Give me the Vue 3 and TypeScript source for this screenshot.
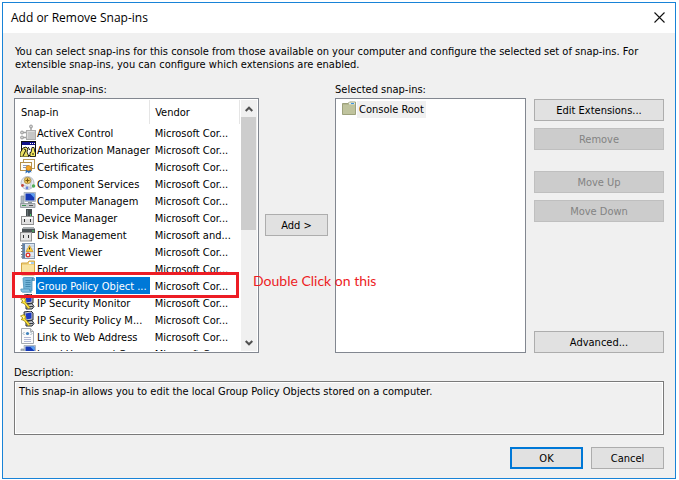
<script setup lang="ts">
import { ref } from 'vue'

interface SnapIn {
  name: string
  vendor: string
  icon: string
}

const corp = 'Microsoft Cor...'

const snapIns: SnapIn[] = [
  { name: 'ActiveX Control', vendor: corp, icon: 'activex' },
  { name: 'Authorization Manager', vendor: corp, icon: 'authorization' },
  { name: 'Certificates', vendor: corp, icon: 'certificate' },
  { name: 'Component Services', vendor: corp, icon: 'component' },
  { name: 'Computer Managem', vendor: corp, icon: 'computer' },
  { name: 'Device Manager', vendor: corp, icon: 'device' },
  { name: 'Disk Management', vendor: 'Microsoft and...', icon: 'disk' },
  { name: 'Event Viewer', vendor: corp, icon: 'event' },
  { name: 'Folder', vendor: corp, icon: 'folder' },
  { name: 'Group Policy Object ...', vendor: corp, icon: 'policy' },
  { name: 'IP Security Monitor', vendor: corp, icon: 'security' },
  { name: 'IP Security Policy M...', vendor: corp, icon: 'security' },
  { name: 'Link to Web Address', vendor: corp, icon: 'link' },
  { name: 'Local Users and Gro...', vendor: corp, icon: 'computer' },
]

const selected = ref(9)
const description = ref(
  'This snap-in allows you to edit the local Group Policy Objects stored on a computer.',
)
</script>

<template>
  <svg class="sprite" aria-hidden="true">
    <symbol id="activex" viewBox="0 0 16 16">
      <path d="M11 3v4M3 8.5h4M3 13.5h4" stroke="#a0a0a0" stroke-width="1.4" />
      <rect x="6.5" y="6.5" width="9" height="9" fill="#c6c6c6" stroke="#adadad" />
      <path d="M7.5 14.500V7.500h7" fill="none" stroke="#dcdcdc" />
      <g fill="#cfcfcf" stroke="#8f8f8f" stroke-width=".8">
        <circle cx="11" cy="2.500" r="1.500" />
        <circle cx="2" cy="8.500" r="1.500" />
        <circle cx="2" cy="13.500" r="1.500" />
      </g>
    </symbol>
    <symbol id="authorization" viewBox="0 0 16 16">
      <rect x="1.500" y=".5" width="14" height="14" fill="#fff" stroke="#111" />
      <path d="M2 1h13v3H2z" fill="#10108a" />
      <path d="M10 2.500h1M12 2.500h1M14 2.500h1" stroke="#fff" />
      <path d="M0 16v-4l3-5 3-1 2 2-1 3 2 5z" fill="#e9de62" stroke="#111" stroke-width=".9" />
      <path d="M4 8l2 1-3 6" fill="none" stroke="#111" />
      <path d="M10 15.500v-4h1l1-5h2l1 5h.5v4z" fill="#f4e95a" stroke="#111" stroke-width=".9" />
      <path d="M8 6l2 3M12 13h2" stroke="#111" />
    </symbol>
    <symbol id="certificate" viewBox="0 0 16 16">
      <rect x="3.500" y="1.500" width="11" height="9" fill="#fff" stroke="#b99a58" />
      <rect x=".5" y="4.500" width="11" height="8" fill="#fffdf5" stroke="#b5904a" />
      <path d="M3 7.500h6M3 9.500h3" stroke="#8797b9" />
      <path d="M6 10.500l-.5 5 2-1.500 1.500 1.500 1-1.500 1.500.5-1.500-4z" fill="#2f6fb8" />
      <circle cx="8.500" cy="10" r="2.500" fill="#f5a623" stroke="#c97b12" stroke-width=".7" />
    </symbol>
    <symbol id="component" viewBox="0 0 16 16">
      <circle cx="7.500" cy="8" r="6.500" fill="#e8eaee" stroke="#b9bec8" />
      <path d="M3 10l9 3M12 3l-2 10" stroke="#c3c9d2" />
      <circle cx="7.500" cy="5.500" r="3.300" fill="#e9c35a" stroke="#a08541" stroke-width=".7" />
      <path d="M7.500 3.500v4M5.500 5.500h4" stroke="#745509" />
      <circle cx="2.500" cy="10.500" r="1.400" fill="#c7453d" />
      <circle cx="13.500" cy="11" r="1.800" fill="#52ae58" />
      <circle cx="7" cy="13" r="1.400" fill="#6b83d8" />
    </symbol>
    <symbol id="computer" viewBox="0 0 16 16">
      <path d="M1 4h3v8H1z" fill="#aeb7bf" stroke="#8a949d" stroke-width=".7" />
      <path d="M4 .5h11.500v9H5z" fill="#d8dfe5" stroke="#a0aab3" stroke-width=".8" />
      <path d="M5.500 1.500h9v7h-9z" fill="#1639b6" />
      <path d="M10 1.500h4.500V6z" fill="#5ba0f2" />
      <path d="M8 10h4v2H8z" fill="#8b969e" />
      <path d="M.5 11.500h14.500v4H.5z" fill="#c5c9cc" stroke="#8a9197" stroke-width=".8" />
      <path d="M2 13.500h4" stroke="#3a9151" />
      <path d="M9 13.500h4" stroke="#555" />
    </symbol>
    <symbol id="device" viewBox="0 0 16 16">
      <path d="M6 0h6v8H6z" fill="#454d50" />
      <path d="M7 1h1v6H7z" fill="#697477" />
      <path d="M10 5h1v2h-1z" fill="#41d063" />
      <rect x="1.500" y="7.500" width="12" height="8" fill="#e1e1e1" stroke="#929292" />
      <path d="M2 8h11v2H2z" fill="#fafafa" />
      <path d="M4 10h1v3H4zM10 10h1v3h-1z" fill="#333" />
    </symbol>
    <symbol id="disk" viewBox="0 0 16 16">
      <path d="M2 3l2-2h9l2 2v4H2z" fill="#4d5457" />
      <path d="M2 3l2-2h9l2 2z" fill="#a7adaf" />
      <path d="M12 5h2" stroke="#47d96b" />
      <rect x=".5" y="6.500" width="11" height="8.500" fill="#e5e5e5" stroke="#949494" />
      <path d="M3 9h1v3H3zM8 9h1v3H8z" fill="#333" />
    </symbol>
    <symbol id="event" viewBox="0 0 16 16">
      <rect x="2.500" y=".5" width="12" height="15" fill="#dfe8f1" stroke="#8497ae" />
      <path d="M3 1h2v14H3z" fill="#5b80ae" />
      <path d="M1 2.500h3M1 5.500h3M1 8.500h3M1 11.500h3M1 14h3" stroke="#777f88" />
      <path d="M7 3h7M7 13.500h7M6 6h8M6 9h8" stroke="#b5c5d5" stroke-width=".8" />
      <path d="M9.500 2.500l3.500 6H6z" fill="#ffd13d" stroke="#bf8516" stroke-width=".6" />
      <path d="M9.500 4.500v2" stroke="#3d3000" />
      <circle cx="8" cy="12" r="2.500" fill="#dc3931" />
      <path d="M7 11l2 2M9 11l-2 2" stroke="#fff" stroke-width=".9" />
    </symbol>
    <symbol id="folder" viewBox="0 0 16 16">
      <path d="M1.500 3h6l1.500-2h5.500v14h-13z" fill="#eed17d" stroke="#d2a642" />
      <path d="M9 2h5v2H9z" fill="#fff" />
      <path d="M11 3h3" stroke="#4f9cdd" />
      <path d="M2 5h12v9H2z" fill="#f8e4a2" />
    </symbol>
    <symbol id="policy" viewBox="0 0 16 16">
      <path d="M3 1.500Q3 .5 4.500.5h8.500q1.500 0 1.500 2v1H12V14H4z" fill="#73b4d8" stroke="#4a92bb" stroke-width=".8" />
      <path d="M.8 12h8.700q0 3 2 3.200h-9Q.8 15 .8 12z" fill="#8cc4e2" stroke="#4a92bb" stroke-width=".8" />
      <path d="M5.500 3.500h5M5.500 5.500h5M5.500 7.500h5M5.500 9.500h5" stroke="#3f84ab" stroke-width=".9" />
      <path d="M12 3.500q0-2 1-2.500" fill="none" stroke="#2c6f99" stroke-width=".8" />
    </symbol>
    <symbol id="security" viewBox="0 0 16 16">
      <path d="M4 1l7-1 2 2v7l-8 1z" fill="#c7cad0" stroke="#252a35" />
      <path d="M5.500 2.500l6-1v6l-5 1z" fill="#1c39c4" />
      <path d="M6 10.500l6-1 2 3-2 2.500H6z" fill="#c2c5ca" stroke="#252a35" />
      <path d="M9 12.500h4" stroke="#353a45" />
      <path d="M.5 5L4 3.500 6 6 5 7.500l5 6L8.500 15 4 9.500 1 8.500 3 7z" fill="#ffe33d" stroke="#8b7a0b" stroke-width=".7" />
      <path d="M2.500 5.500l1.500 1" stroke="#fff" />
    </symbol>
    <symbol id="link" viewBox="0 0 16 16">
      <path d="M1.500.5h9l3 3v12h-12z" fill="#fbfbfb" stroke="#a5aaaf" />
      <path d="M10.500.5v3h3" fill="#ddd" stroke="#a5aaaf" />
      <path d="M4.500 4l-1.500 1.500 1.500 1.500M10.500 4L12 5.500 10.500 7" fill="none" stroke="#8ba1b3" stroke-width=".9" />
      <circle cx="7.500" cy="5.500" r="1.600" fill="#3f83bd" />
      <path d="M4 9.500h7M4 11.500h7M4 13.500h7" stroke="#a9b1d0" stroke-width=".9" />
    </symbol>
    <symbol id="root" viewBox="0 0 16 16">
      <path d="M1.500 2.500h5.500l1.500-1.500h6v12.500h-13z" fill="#b2b68e" stroke="#9da17c" />
      <path d="M8 1.500h6v2H8z" fill="#e9eee6" />
      <path d="M10 2.500h3" stroke="#3c96e4" />
      <path d="M2 4h12v9H2z" fill="#bfc39d" />
    </symbol>
  </svg>

  <main class="dialog">
    <header class="titlebar">
      <h1>Add or Remove Snap-ins</h1>
      <button class="close" type="button" aria-label="Close">
        <svg viewBox="0 0 11 11"><path d="M.5.5l10 10M10.500.5l-10 10" stroke="#111" stroke-width="1.100" /></svg>
      </button>
    </header>

    <div class="body">
      <p class="intro">
        You can select snap-ins for this console from those available on your computer and configure the selected set of
        snap-ins. For extensible snap-ins, you can configure which extensions are enabled.
      </p>

      <div class="columns">
        <section class="field">
          <h2 id="available-label">Available snap-ins:</h2>
          <div class="panel available">
            <div class="viewport">
              <table aria-labelledby="available-label">
                <thead>
                  <tr>
                    <th class="name-head">Snap-in</th>
                    <th class="vendor-head">Vendor</th>
                  </tr>
                </thead>
                <tbody>
                  <tr
                    v-for="(item, index) in snapIns"
                    :key="item.name"
                    :class="{ selected: index === selected }"
                    @click="selected = index"
                  >
                    <td>
                      <div class="entry">
                        <svg class="icon"><use :href="'#' + item.icon" /></svg>
                        <span class="name">{{ item.name }}</span>
                      </div>
                    </td>
                    <td class="vendor">{{ item.vendor }}</td>
                  </tr>
                </tbody>
              </table>
            </div>
            <div class="scrollbar">
              <button type="button" aria-label="Scroll up">
                <svg viewBox="0 0 8 6"><path d="M.7 5L4 1.700 7.300 5" /></svg>
              </button>
              <div class="track"><div class="thumb"></div></div>
              <button type="button" aria-label="Scroll down">
                <svg viewBox="0 0 8 6"><path d="M.7 1L4 4.300 7.300 1" /></svg>
              </button>
            </div>
            <div class="callout">
              <div class="callout-box"></div>
              <span class="callout-text">Double Click on this</span>
            </div>
          </div>
        </section>

        <div class="add"><button class="btn" type="button">Add &gt;</button></div>

        <section class="field">
          <h2 id="selected-label">Selected snap-ins:</h2>
          <ul class="panel tree" aria-labelledby="selected-label">
            <li>
              <svg class="icon"><use href="#root" /></svg>
              <span class="node">Console Root</span>
            </li>
          </ul>
        </section>

        <div class="actions">
          <button class="btn" type="button">Edit Extensions...</button>
          <button class="btn" type="button" disabled>Remove</button>
          <button class="btn move" type="button" disabled>Move Up</button>
          <button class="btn" type="button" disabled>Move Down</button>
          <button class="btn advanced" type="button">Advanced...</button>
        </div>
      </div>

      <div class="description">
        <label for="description">Description:</label>
        <textarea id="description" v-model="description" readonly></textarea>
      </div>

      <footer class="footer">
        <button class="btn primary" type="button">OK</button>
        <button class="btn" type="button">Cancel</button>
      </footer>
    </div>
  </main>
</template>

<style>
body {
  background: #fff;
}
</style>

<style scoped>
.sprite {
  position: absolute;
  width: 0;
  height: 0;
}

.dialog {
  box-sizing: border-box;
  display: flex;
  flex-direction: column;
  min-height: calc(100vh - 3px);
  margin: 2px 3px 1px 2px;
  border: 1px solid #1883d7;
  background: #f0f0f0;
  color: #000;
  font: 11px/13px 'DejaVu Sans Condensed', 'DejaVu Sans', sans-serif;
}

.dialog button,
.dialog textarea {
  font: inherit;
  color: inherit;
}

.titlebar {
  display: flex;
  align-items: center;
  justify-content: space-between;
  height: 30px;
  padding: 0 10px 0 8px;
  background: #fff;
}

h1 {
  margin: 0;
  font: 12px/16px 'Open Sans', sans-serif;
}

.close {
  display: flex;
  padding: 0 0 2px;
  border: 0;
  background: none;
}

.close svg {
  width: 11px;
  height: 11px;
}

.body {
  padding: 12px 11px 9px;
}

.intro {
  margin: 0 0 12px 1px;
  padding-right: 24px;
}

.columns {
  display: grid;
  grid-template-columns: minmax(0, 245fr) 76px minmax(0, 191fr) 138px;
}

h2,
.description label {
  display: block;
  margin: 0 0 2px;
  font: inherit;
}

.panel {
  box-sizing: border-box;
  height: 255px;
  margin: 0;
  border: 1px solid #828790;
  background: #fff;
}

.available {
  position: relative;
  display: flex;
  padding: 1px 1px 1px 0;
}

.viewport {
  flex: 1;
  min-width: 0;
  overflow: hidden;
}

table {
  width: 100%;
  table-layout: fixed;
  border-collapse: collapse;
  white-space: nowrap;
}

th,
td {
  padding: 0;
  font-weight: normal;
  text-align: left;
}

th {
  box-sizing: border-box;
  height: 24px;
  border-right: 1px solid #e5e5e5;
}

.name-head {
  width: 60%;
  padding-left: 6px;
}

.vendor-head {
  padding-left: 5px;
}

.entry {
  display: flex;
  padding-left: 5px;
}

.icon {
  flex: none;
  width: 16px;
  height: 16px;
}

.name {
  flex: 1;
  padding: 2px 0 0 1px;
  line-height: 15px;
}

.vendor {
  padding: 2px 0 0 5px;
  line-height: 15px;
}

.selected .name {
  background: #0078d7;
  color: #fff;
}

.scrollbar {
  display: flex;
  flex-direction: column;
  width: 16px;
  margin-left: 1px;
  background: #f0f0f0;
}

.scrollbar button {
  display: flex;
  align-items: center;
  justify-content: center;
  height: 17px;
  padding: 0;
  border: 0;
  background: none;
}

.scrollbar svg {
  width: 8px;
  height: 6px;
  fill: none;
  stroke: #505050;
  stroke-width: 2;
}

.track {
  flex: 1;
}

.thumb {
  width: 15px;
  height: 52%;
  background: #cdcdcd;
}

.callout {
  position: absolute;
  top: 173px;
  left: -3px;
  display: flex;
  align-items: center;
  gap: 14px;
  width: calc(100% - 16px);
  pointer-events: none;
}

.callout-box {
  box-sizing: border-box;
  flex: none;
  width: 100%;
  height: 26px;
  border: 3px solid #ed1c24;
}

.callout-text {
  margin-top: -8px;
  color: #ed1c24;
  font: 14px/16px Lato, sans-serif;
  white-space: nowrap;
}

.btn {
  box-sizing: border-box;
  height: 22px;
  padding: 0;
  border: 1px solid #adadad;
  background: #e1e1e1;
  white-space: nowrap;
}

.dialog .btn:disabled {
  border-color: #bfbfbf;
  background: #ccc;
  color: #838383;
}

.add {
  display: flex;
  justify-content: center;
  align-items: center;
  padding: 14px 1px 0 0;
}

.add .btn {
  width: 63px;
}

.tree {
  padding: 2px 5px;
  list-style: none;
}

.tree li {
  display: flex;
}

.node {
  padding: 0 2px;
  background: #f0f0f0;
  line-height: 17px;
}

.actions {
  display: flex;
  flex-direction: column;
  gap: 7px;
  padding: 16px 0 0 8px;
}

.move {
  margin-top: 14px;
}

.advanced {
  margin-top: auto;
}

.description {
  margin-top: 13px;
}

textarea {
  box-sizing: border-box;
  display: block;
  width: 100%;
  height: 54px;
  padding: 3px 4px;
  border: 1px solid #7a7a7a;
  outline: 0;
  background: #f0f0f0;
  box-shadow: inset 0 0 0 1px #fff;
  resize: none;
}

.footer {
  display: flex;
  justify-content: flex-end;
  gap: 8px;
  margin-top: 12px;
}

.footer .btn {
  width: 73px;
}

.footer .primary {
  border: 2px solid #0078d7;
}
</style>
